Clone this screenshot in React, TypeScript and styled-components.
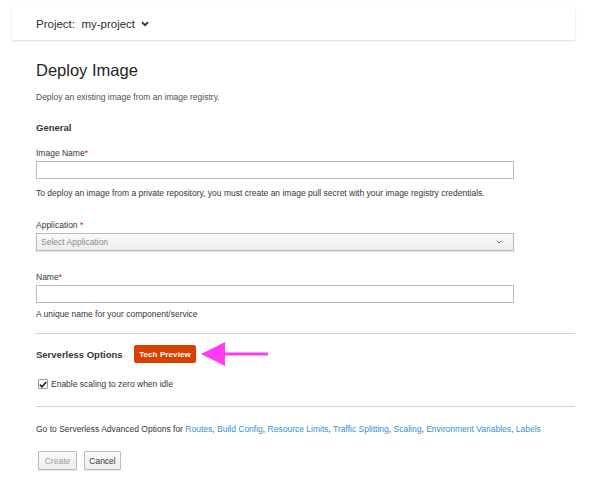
import React from "react";
import styled, { createGlobalStyle } from "styled-components";

const Global = createGlobalStyle`
  html, body { margin: 0; padding: 0; background: #fff; }
  body { font-family: "Liberation Sans", Arial, sans-serif; color: #363636; }
  * { box-sizing: border-box; }
`;

const Page = styled.div`
  width: 589px;
  height: 488px;
  padding-top: 8px;
  overflow: hidden;
`;

const Header = styled.div`
  margin: 0 14px 0 12px;
  height: 32px;
  display: flex;
  align-items: center;
  padding-left: 24px;
  background: #fff;
  box-shadow: 0 1px 2px rgba(0, 0, 0, 0.14), 0 0 1px rgba(0, 0, 0, 0.06);
  font-size: 11.5px;
  color: #292e34;
  gap: 6px;
`;

const Main = styled.div`
  padding: 0 14px 0 36px;
`;

const Title = styled.h1`
  margin: 19px 0 0;
  font-size: 16.5px;
  font-weight: 400;
  line-height: 22px;
  color: #1f1f1f;
`;

const Desc = styled.p`
  margin: 11px 0 0;
  font-size: 8.5px;
  line-height: 11px;
  color: #4d5258;
`;

const Section = styled.h2`
  margin: 19px 0 0;
  font-size: 9.5px;
  font-weight: 700;
  line-height: 12px;
  color: #363636;
`;

const Field = styled.div<{ $top: number }>`
  margin-top: ${(p) => p.$top}px;
  display: flex;
  flex-direction: column;
`;

const Label = styled.label`
  font-size: 8.5px;
  line-height: 11px;
  color: #363636;
  margin-bottom: 2px;
`;

const Req = styled.span`
  color: #c9190b;
`;

const Input = styled.div`
  width: 478px;
  height: 18px;
  border: 1px solid #bbb;
  background: #fff;
`;

const Select = styled.div`
  width: 478px;
  height: 18px;
  border: 1px solid #bbb;
  background: linear-gradient(#fafafa, #ededed);
  box-shadow: 0 1px 1px rgba(0, 0, 0, 0.12);
  display: flex;
  align-items: center;
  justify-content: space-between;
  padding: 0 11px 0 4px;
  font-size: 8.5px;
  color: #8b8d8f;
`;

const Help = styled.div<{ $top: number }>`
  margin-top: ${(p) => p.$top}px;
  font-size: 8.5px;
  line-height: 11px;
  color: #363636;
`;

const Divider = styled.hr<{ $top: number; $left?: number }>`
  margin: ${(p) => p.$top}px 0 0 ${(p) => p.$left ?? -1}px;
  border: 0;
  border-top: 1px solid #d1d1d1;
  height: 0;
`;

const OptionsRow = styled.div`
  margin-top: 11px;
  display: flex;
  align-items: center;
  height: 18px;
`;

const OptionsTitle = styled.span`
  font-size: 9.5px;
  font-weight: 700;
  color: #363636;
  width: 98px;
`;

const Badge = styled.span`
  height: 18px;
  width: 62px;
  display: inline-flex;
  align-items: center;
  justify-content: center;
  background: #d64000;
  border-radius: 2px;
  color: #fff;
  font-size: 8px;
  font-weight: 700;
  letter-spacing: 0.1px;
`;

const Arrow = styled.svg`
  margin-left: 5px;
`;

const CheckRow = styled.label`
  margin: 16px 0 0 2px;
  height: 10px;
  display: flex;
  align-items: center;
  gap: 3px;
  font-size: 8.5px;
  color: #363636;
`;

const Box = styled.span`
  width: 10px;
  height: 10px;
  border: 1px solid #9a9a9a;
  border-radius: 1px;
  background: #fff;
  display: inline-flex;
  align-items: center;
  justify-content: center;
`;

const Links = styled.p`
  margin: 17px 0 0;
  font-size: 8.5px;
  line-height: 11px;
  color: #363636;
`;

const A = styled.a`
  color: #3093d3;
  text-decoration: none;
`;

const Buttons = styled.div`
  margin: 16px 0 0 2px;
  display: flex;
  gap: 7px;
`;

const Button = styled.button<{ $disabled?: boolean; $w: number }>`
  width: ${(p) => p.$w}px;
  height: 19px;
  padding: 0;
  border: 1px solid #bbb;
  border-radius: 1px;
  background: linear-gradient(#fafafa, #ededed);
  box-shadow: 0 1px 1px rgba(0, 0, 0, 0.12);
  font-family: inherit;
  font-size: 8.5px;
  color: ${(p) => (p.$disabled ? "#9c9c9c" : "#363636")};
`;

const links = [
  "Routes",
  "Build Config",
  "Resource Limits",
  "Traffic Splitting",
  "Scaling",
  "Environment Variables",
  "Labels",
];

export default function App() {
  return (
    <Page>
      <Global />
      <Header>
        <span>Project:&nbsp; my-project</span>
        <svg width="8" height="6" viewBox="0 0 8 6">
          <path d="M1 1.2 L4 4.2 L7 1.2" fill="none" stroke="#292e34" strokeWidth="1.8" />
        </svg>
      </Header>
      <Main>
        <Title>Deploy Image</Title>
        <Desc>Deploy an existing image from an image registry.</Desc>
        <Section>General</Section>
        <Field $top={14}>
          <Label>
            Image Name<Req>*</Req>
          </Label>
          <Input />
          <Help $top={9}>
            To deploy an image from a private repository, you must create an image pull secret with your
            image registry credentials.
          </Help>
        </Field>
        <Field $top={21}>
          <Label>
            Application <Req>*</Req>
          </Label>
          <Select>
            <span>Select Application</span>
            <svg width="6" height="4" viewBox="0 0 6 4">
              <path d="M0.8 0.8 L3 3 L5.2 0.8" fill="none" stroke="#666" strokeWidth="1" />
            </svg>
          </Select>
        </Field>
        <Field $top={21}>
          <Label>
            Name<Req>*</Req>
          </Label>
          <Input />
          <Help $top={6}>A unique name for your component/service</Help>
        </Field>
        <Divider $top={13} />
        <OptionsRow>
          <OptionsTitle>Serverless Options</OptionsTitle>
          <Badge>Tech Preview</Badge>
          <Arrow width="68" height="24" viewBox="0 0 68 24">
            <polygon points="0,12 24,0 24,24" fill="#ff3df0" />
            <rect x="22" y="10.5" width="45" height="3" fill="#ff3df0" />
          </Arrow>
        </OptionsRow>
        <CheckRow>
          <Box>
            <svg width="8" height="7" viewBox="0 0 8 7">
              <path d="M0.8 3.6 L3 5.8 L7.3 1" fill="none" stroke="#222" strokeWidth="1.6" />
            </svg>
          </Box>
          Enable scaling to zero when idle
        </CheckRow>
        <Divider $top={17} $left={0} />
        <Links>
          Go to Serverless Advanced Options for{" "}
          {links.map((l, i) => (
            <React.Fragment key={l}>
              <A href="#">{l}</A>
              {i < links.length - 1 ? ", " : ""}
            </React.Fragment>
          ))}
        </Links>
        <Buttons>
          <Button $disabled $w={39}>
            Create
          </Button>
          <Button $w={37}>Cancel</Button>
        </Buttons>
      </Main>
    </Page>
  );
}
